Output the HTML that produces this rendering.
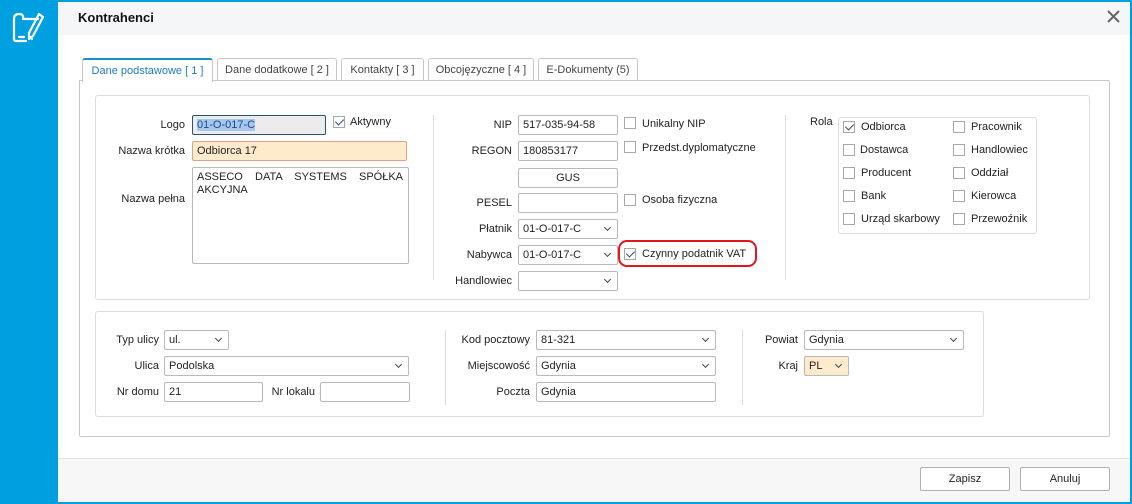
<!DOCTYPE html>
<html><head><meta charset="utf-8"><style>
*{box-sizing:border-box}
body{margin:0;width:1132px;height:504px;position:relative;overflow:hidden;background:#fff;font-family:"Liberation Sans",sans-serif;font-size:11px;color:#222}
div,span{position:absolute}
.lb{text-align:right;width:140px;line-height:20px;white-space:nowrap}
.in{border:1px solid #b9b9b9;border-radius:2px;height:20px;line-height:19px;padding-left:4px;background:#fff;white-space:nowrap}
.dd::after{content:"";position:absolute;right:7px;top:5px;width:4px;height:4px;border-right:1.2px solid #444;border-bottom:1.2px solid #444;transform:rotate(45deg)}
.cb{width:12px;height:12px;border:1px solid #a8a8a8;background:#fff}
.cb.on::after{content:"";position:absolute;left:3px;top:0px;width:4px;height:7px;border-right:1.5px solid #2a4d80;border-bottom:1.5px solid #2a4d80;transform:rotate(45deg)}
.t{white-space:nowrap;line-height:14px}
.tab{top:58px;height:23px;border:1px solid #c8c8c8;border-bottom:none;border-radius:3px 3px 0 0;line-height:22px;text-align:center;color:#444;background:#fff}
.grp{border:1px solid #dcdcdc;border-radius:3px}
.btn{border:1px solid #b0b0b0;border-radius:2px;background:#fff;text-align:center;line-height:22px;height:24px}
</style></head><body>
<div style="left:0;top:0;width:58px;height:504px;background:#009fdf"></div>
<div style="left:0;top:0;width:1132px;height:2px;background:#009fdf"></div>
<div style="left:1130px;top:0;width:2px;height:504px;background:#009fdf"></div>
<div style="left:0;top:502px;width:1132px;height:2px;background:#009fdf"></div>
<svg style="position:absolute;left:10px;top:9px" width="36" height="36" viewBox="0 0 36 36" fill="none" stroke="#fff" stroke-width="2.2" stroke-linejoin="round" stroke-linecap="round">
<path d="M4 10 L4 30 Q4 32 6 32 L16 32"/><path d="M4 10 Q4 5 9 5 Q14 5 13 10 L28 10"/><path d="M9 28 L14 28"/><path d="M29 5 L33 8 L23 27 L19 30 L19 24 Z"/><path d="M21 28 L22 30"/></svg>
<div style="left:58px;top:2px;width:1072px;height:33px;background:#f5f6f7"></div>
<div class="t" style="left:78px;top:11px;font-size:13px;font-weight:bold;color:#111">Kontrahenci</div>
<svg style="position:absolute;left:1107px;top:10px" width="13" height="13" viewBox="0 0 13 13" stroke="#666" stroke-width="2"><path d="M1 1 L12 12 M12 1 L1 12"/></svg>

<div class="tab" style="left:82px;width:131px;color:#1e7bbf;border-top:2px solid #1a8fd0;height:24px;z-index:2">Dane podstawowe [ 1 ]</div>
<div class="tab" style="left:217px;width:120px">Dane dodatkowe [ 2 ]</div>
<div class="tab" style="left:341px;width:83px">Kontakty [ 3 ]</div>
<div class="tab" style="left:428px;width:106px">Obcojęzyczne [ 4 ]</div>
<div class="tab" style="left:538px;width:100px">E-Dokumenty (5)</div>
<div style="left:79px;top:80px;width:1031px;height:357px;border:1px solid #c8c8c8;border-radius:0 2px 2px 2px"></div>

<div class="grp" style="left:95px;top:95px;width:995px;height:205px"></div>
<div class="lb" style="left:45px;top:115px">Logo</div>
<div class="in" style="left:192px;top:115px;width:134px;background:#ececec;border-color:#2c5070"><span style="position:static;background:#a6c8ef;color:#1c4a8a">01-O-017-C</span></div>
<div class="cb on" style="left:333px;top:116px"></div><div class="t" style="left:350px;top:115px">Aktywny</div>
<div class="lb" style="left:45px;top:141px">Nazwa krótka</div>
<div class="in" style="left:192px;top:141px;width:215px;background:#fdebcc;border-color:#d9a28a">Odbiorca 17</div>
<div class="lb" style="left:45px;top:189px">Nazwa pełna</div>
<div class="in" style="left:192px;top:167px;width:217px;height:97px;line-height:13px;padding-top:3px;white-space:normal"><span style="position:static;display:block;text-align:justify;text-align-last:justify;width:206px">ASSECO DATA SYSTEMS SPÓŁKA</span>AKCYJNA</div>
<div style="left:433px;top:115px;width:1px;height:165px;background:#ddd"></div>

<div class="lb" style="left:372px;top:115px">NIP</div>
<div class="in" style="left:518px;top:115px;width:100px">517-035-94-58</div>
<div class="cb" style="left:624px;top:117px"></div><div class="t" style="left:642px;top:117px">Unikalny NIP</div>
<div class="lb" style="left:372px;top:141px">REGON</div>
<div class="in" style="left:518px;top:141px;width:100px">180853177</div>
<div class="cb" style="left:624px;top:141px"></div><div class="t" style="left:642px;top:141px">Przedst.dyplomatyczne</div>
<div class="in" style="left:518px;top:168px;width:100px;text-align:center;padding:0">GUS</div>
<div class="lb" style="left:372px;top:193px">PESEL</div>
<div class="in" style="left:518px;top:193px;width:100px"></div>
<div class="cb" style="left:624px;top:194px"></div><div class="t" style="left:642px;top:193px">Osoba fizyczna</div>
<div class="lb" style="left:372px;top:219px">Płatnik</div>
<div class="in dd" style="left:518px;top:219px;width:100px">01-O-017-C</div>
<div class="lb" style="left:372px;top:245px">Nabywca</div>
<div class="in dd" style="left:518px;top:245px;width:100px">01-O-017-C</div>
<div class="cb on" style="left:624px;top:248px"></div><div class="t" style="left:642px;top:247px">Czynny podatnik VAT</div>
<div style="left:618px;top:240px;width:139px;height:27px;border:2px solid #e2161d;border-radius:9px"></div>
<div class="lb" style="left:372px;top:271px">Handlowiec</div>
<div class="in dd" style="left:518px;top:271px;width:100px"></div>
<div style="left:785px;top:115px;width:1px;height:165px;background:#ddd"></div>

<div class="t" style="left:810px;top:115px">Rola</div>
<div class="grp" style="left:838px;top:117px;width:199px;height:117px"></div>
<div class="cb on" style="left:843px;top:121px"></div><div class="t" style="left:861px;top:120px">Odbiorca</div>
<div class="cb" style="left:843px;top:144px"></div><div class="t" style="left:860px;top:143px">Dostawca</div>
<div class="cb" style="left:843px;top:167px"></div><div class="t" style="left:861px;top:166px">Producent</div>
<div class="cb" style="left:843px;top:190px"></div><div class="t" style="left:861px;top:189px">Bank</div>
<div class="cb" style="left:843px;top:213px"></div><div class="t" style="left:861px;top:212px">Urząd skarbowy</div>
<div class="cb" style="left:953px;top:121px"></div><div class="t" style="left:971px;top:120px">Pracownik</div>
<div class="cb" style="left:953px;top:144px"></div><div class="t" style="left:971px;top:143px">Handlowiec</div>
<div class="cb" style="left:953px;top:167px"></div><div class="t" style="left:971px;top:166px">Oddział</div>
<div class="cb" style="left:953px;top:190px"></div><div class="t" style="left:971px;top:189px">Kierowca</div>
<div class="cb" style="left:953px;top:213px"></div><div class="t" style="left:971px;top:212px">Przewoźnik</div>

<div class="grp" style="left:95px;top:311px;width:889px;height:106px"></div>
<div class="lb" style="left:19px;top:330px">Typ ulicy</div>
<div class="in dd" style="left:164px;top:330px;width:65px">ul.</div>
<div class="lb" style="left:19px;top:356px">Ulica</div>
<div class="in dd" style="left:164px;top:356px;width:245px">Podolska</div>
<div class="lb" style="left:19px;top:382px">Nr domu</div>
<div class="in" style="left:164px;top:382px;width:99px">21</div>
<div class="lb" style="left:175px;top:382px">Nr lokalu</div>
<div class="in" style="left:320px;top:382px;width:90px"></div>
<div style="left:445px;top:330px;width:1px;height:75px;background:#ddd"></div>
<div class="lb" style="left:390px;top:330px">Kod pocztowy</div>
<div class="in dd" style="left:536px;top:330px;width:180px">81-321</div>
<div class="lb" style="left:390px;top:356px">Miejscowość</div>
<div class="in dd" style="left:536px;top:356px;width:180px">Gdynia</div>
<div class="lb" style="left:390px;top:382px">Poczta</div>
<div class="in" style="left:536px;top:382px;width:180px">Gdynia</div>
<div style="left:742px;top:330px;width:1px;height:75px;background:#ddd"></div>
<div class="lb" style="left:658px;top:330px">Powiat</div>
<div class="in dd" style="left:804px;top:330px;width:160px">Gdynia</div>
<div class="lb" style="left:658px;top:356px">Kraj</div>
<div class="in dd" style="left:804px;top:356px;width:45px;background:#fdebcc">PL</div>

<div style="left:58px;top:458px;width:1072px;height:44px;background:#f7f7f7;border-top:1px solid #e2e2e2"></div>
<div class="btn" style="left:920px;top:467px;width:90px">Zapisz</div>
<div class="btn" style="left:1020px;top:467px;width:90px">Anuluj</div>
</body></html>
